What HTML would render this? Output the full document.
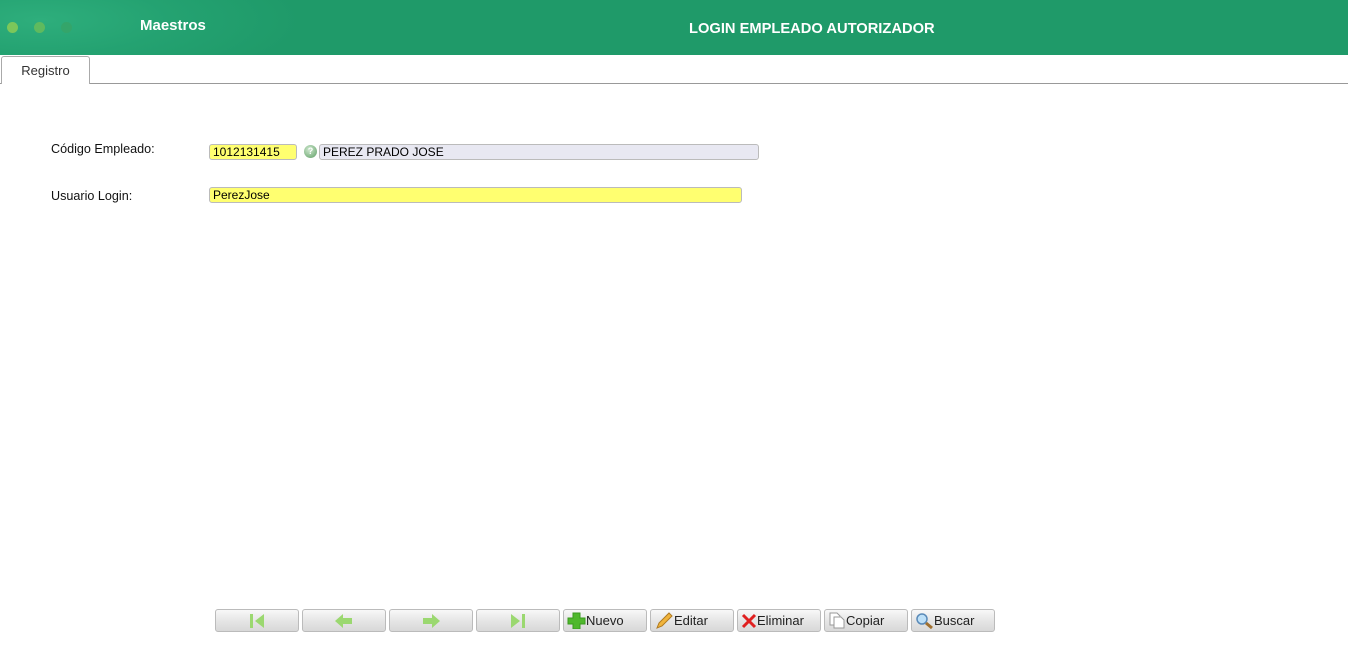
<!DOCTYPE html>
<html><head><meta charset="utf-8"><style>
*{box-sizing:border-box;margin:0;padding:0}
body{width:1348px;height:657px;background:#fff;font-family:"Liberation Sans",sans-serif;position:relative;overflow:hidden}
.hdr{position:absolute;left:0;top:0;width:1348px;height:55px;background:radial-gradient(ellipse 260px 70px at 40px 20px,#2eae7c 0%,#24a271 50%,#1f9a69 100%)}
.dot{position:absolute;top:22px;width:11px;height:11px;border-radius:50%}
.t1{position:absolute;left:140px;top:17px;color:#fff;font-weight:bold;font-size:15px}
.t2{position:absolute;left:689px;top:21px;color:#fff;font-weight:bold;font-size:14.7px}
.tab{position:absolute;left:1px;top:56px;width:89px;height:28px;border:1px solid #aaa;border-bottom:none;background:#fff;font-size:13px;color:#333;text-align:center;line-height:28px;border-radius:3px 3px 0 0;z-index:2}
.line{position:absolute;left:0;top:83px;width:1348px;height:1px;background:#999}
.lbl{position:absolute;font-size:12.6px;color:#111}
.inp{position:absolute;height:16px;border:1px solid #bbb;border-radius:3px;font-size:12px;line-height:14px;padding-left:3px;color:#000}
.btn{position:absolute;top:609px;width:84px;height:23px;border:1px solid #bbb;border-radius:3px;background:linear-gradient(#f8f8f8,#e6e6e6 50%,#d8d8d8);font-size:13px;color:#222;display:flex;align-items:center;justify-content:center}
.btn.l{justify-content:flex-start;padding-left:3px}
</style></head><body>
<div class="hdr">
<div class="dot" style="left:7px;background:#7cc75a"></div>
<div class="dot" style="left:34px;background:#5fba5e"></div>
<div class="dot" style="left:61px;background:#34a56a"></div>
<div class="t1">Maestros</div><div class="t2">LOGIN EMPLEADO AUTORIZADOR</div></div>
<div class="tab">Registro</div><div class="line"></div>
<div class="lbl" style="left:51px;top:142px">Código Empleado:</div>
<div class="lbl" style="left:51px;top:189px">Usuario Login:</div>
<div class="inp" style="left:209px;top:144px;width:88px;background:#ffff70">1012131415</div>
<div style="position:absolute;left:304px;top:145px;width:13px;height:13px;border-radius:50%;background:radial-gradient(circle at 40% 35%,#cfe8cf,#5e9e64);color:#fff;font-size:9px;font-weight:bold;text-align:center;line-height:13px">?</div>
<div class="inp" style="left:319px;top:144px;width:440px;background:#e8e8f2">PEREZ PRADO JOSE</div>
<div class="inp" style="left:209px;top:187px;width:533px;background:#ffff70">PerezJose</div>

<div class="btn" style="left:215px"><svg width="18" height="16"><rect x="2" y="1" width="3" height="14" fill="#9bd870"/><path d="M16 1 L7 8 L16 15Z" fill="#9bd870"/></svg></div>
<div class="btn" style="left:302px"><svg width="20" height="16"><path d="M1 8 L9 1 V5 H18 V11 H9 V15Z" fill="#9bd870"/></svg></div>
<div class="btn" style="left:389px"><svg width="20" height="16"><path d="M19 8 L11 1 V5 H2 V11 H11 V15Z" fill="#9bd870"/></svg></div>
<div class="btn" style="left:476px"><svg width="18" height="16"><rect x="13" y="1" width="3" height="14" fill="#9bd870"/><path d="M2 1 L11 8 L2 15Z" fill="#9bd870"/></svg></div>
<div class="btn l" style="left:563px"><svg width="19" height="17"><path d="M6 1h7v5h5v6h-5v5H6v-5H1V6h5z" fill="#4fb82c" stroke="#3a9a1e"/></svg>Nuevo</div>
<div class="btn l" style="left:650px"><svg width="20" height="17"><path d="M3 16 L5 11 L15 1 L18 4 L8 14Z" fill="#f0b43c" stroke="#b07a20"/></svg>Editar</div>
<div class="btn l" style="left:737px"><svg width="16" height="16"><path d="M2 2 L14 14 M14 2 L2 14" stroke="#e02020" stroke-width="3"/></svg>Eliminar</div>
<div class="btn l" style="left:824px"><svg width="18" height="17"><path d="M2 1h7l3 3v9H2z" fill="#fff" stroke="#999"/><path d="M6 5h7l3 3v8H6z" fill="#fff" stroke="#999"/></svg>Copiar</div>
<div class="btn l" style="left:911px"><svg width="19" height="17"><circle cx="7" cy="7" r="5" fill="#bde0f8" stroke="#5a8ab8" stroke-width="1.5"/><path d="M11 11 L17 16" stroke="#a07030" stroke-width="3"/></svg>Buscar</div>
</body></html>
